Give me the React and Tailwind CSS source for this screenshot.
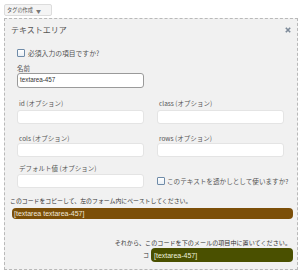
export default function App() {
  const jp = "font-['Noto_Sans_CJK_JP','Liberation_Sans',sans-serif]";
  const label = `h-[10px] pl-[2px] flex items-center text-[6.5px] leading-none text-[#555] whitespace-nowrap ${jp}`;
  const input = "h-[14px] w-[127px] bg-white rounded-[3px] border border-[#e4e4e4]";
  const Checkbox = () => (
    <div className="w-[8px] h-[8px] border border-[#6f8ba8] rounded-[1px] bg-gradient-to-b from-white to-[#e8eef4] shrink-0" />
  );
  return (
    <div className={`w-[301px] h-[273px] bg-white overflow-hidden ${jp}`}>
      <div className="pt-[4px] pl-[4px]">
        <div className="h-[12px] w-[48px] border border-[#dcdcdc] bg-[#f4f4f4] rounded-[2px] flex items-center pl-[2px] gap-[3px] text-[5.2px] leading-none text-[#555]">
          <span>タグの作成</span>
          <span className="text-[5px] text-[#777]">▼</span>
        </div>
      </div>
      <div className="mt-[2px] ml-[4px] w-[294px] h-[252px] border border-dashed border-[#b9b9b9] bg-[#f1f1f1] flex flex-col">
        <div className="h-[22px] flex items-center justify-between pl-[6px] pr-[6px]">
          <span className="text-[8px] leading-none text-[#555]">テキストエリア</span>
          <svg width="6" height="6" viewBox="0 0 6 6">
            <path d="M0.8 0.8 L5.2 5.2 M5.2 0.8 L0.8 5.2" stroke="#7d8a99" strokeWidth="1.6" />
          </svg>
        </div>
        <div className="mt-[7px] h-[10px] pl-[12px] flex items-center gap-[3px]">
          <Checkbox />
          <span className="text-[6.8px] leading-none text-[#555] whitespace-nowrap">必須入力の項目ですか?</span>
        </div>
        <div className="mt-[5px] pl-[12px] flex flex-col">
          <div className="h-[10px] flex items-center text-[6.5px] leading-none text-[#555]">名前</div>
          <div className="h-[15px] w-[127px] bg-white rounded-[3px] border border-[#9a9a9a] flex items-center pl-[2px] text-[6.3px] leading-none text-[#333] font-['Liberation_Sans',sans-serif]">
            textarea-457
          </div>
        </div>
        <div className="mt-[10px] pl-[12px] grid grid-cols-[127px_127px] gap-x-[13px]">
          <div className={label}>id (オプション)</div>
          <div className={label}>class (オプション)</div>
          <div className={`mt-[2px] ${input}`} />
          <div className={`mt-[2px] ${input}`} />
          <div className={`mt-[9px] ${label}`}>cols (オプション)</div>
          <div className={`mt-[9px] ${label}`}>rows (オプション)</div>
          <div className={input} />
          <div className={input} />
          <div className={`mt-[6px] ${label} pl-0`}>デフォルト値 (オプション)</div>
          <div className="mt-[6px] h-[10px]" />
          <div className={`mt-[1px] ${input}`} />
          <div className="mt-[1px] h-[14px] flex items-center gap-[2px] whitespace-nowrap">
            <Checkbox />
            <span className="text-[6.6px] leading-none text-[#555] whitespace-nowrap">このテキストを透かしとして使いますか?</span>
          </div>
        </div>
        <div className="mt-[8px] pl-[5px] h-[10px] flex items-center text-[5.9px] leading-none text-[#333] whitespace-nowrap">
          このコードをコピーして、左のフォーム内にペーストしてください。
        </div>
        <div className="mt-[2px] ml-[7px] w-[281px] h-[11px] rounded-[4px] bg-[#7c4f08] flex items-center pl-[2px] text-[7px] leading-none text-[#f0e8da] font-['Liberation_Sans',sans-serif]">
          [textarea textarea-457]
        </div>
        <div className="mt-[19px] pr-[6px] h-[10px] flex items-center justify-end text-[6.1px] leading-none text-[#333] whitespace-nowrap">
          それから、このコードを下のメールの項目中に置いてください。
        </div>
        <div className="flex items-center justify-end pr-[4px] gap-[2px]">
          <span className="text-[6px] leading-none text-[#333]">コ</span>
          <div className="w-[142px] h-[14px] rounded-[4px] bg-[#4a5000] flex items-center pl-[3px] text-[7px] leading-none text-[#eef0dc] font-['Liberation_Sans',sans-serif]">
            [textarea-457]
          </div>
        </div>
      </div>
    </div>
  );
}
